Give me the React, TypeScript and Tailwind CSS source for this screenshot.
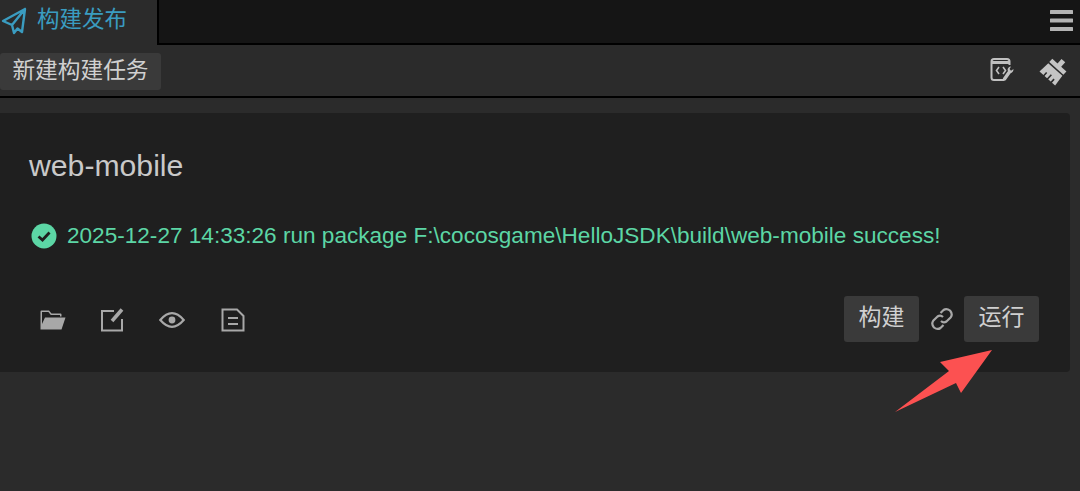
import React from "react";

const sans = "font-['Liberation_Sans','Noto_Sans_CJK_SC',sans-serif]";

function Send() {
  return (
    <svg width="26" height="28" viewBox="0 0 26 28" fill="none" stroke="#3a9cc0" strokeWidth="2.4" strokeLinejoin="round" strokeLinecap="round">
      <path d="M24 2 L2 14 L11 18 L13 26 L16.5 21.5 L21 25 Z M24 2 L11 18" />
    </svg>
  );
}

function Lines() {
  return (
    <svg width="24" height="22" viewBox="0 0 24 22" fill="#b3b3b3">
      <rect x="0" y="0" width="23" height="4" rx="0.5" />
      <rect x="0" y="8.5" width="23" height="4" rx="0.5" />
      <rect x="0" y="17" width="23" height="4" rx="0.5" />
    </svg>
  );
}

function CodeWrench() {
  return (
    <svg width="24" height="24" viewBox="0 0 24 24" fill="none" stroke="#c0c0c0" strokeWidth="2">
      <path d="M14 22 H4 Q1.5 22 1.5 19.5 V3.5 Q1.5 1 4 1 H17 Q19.5 1 19.5 3.5 V7" />
      <path d="M2 4.5 H19" strokeWidth="3" />
      <path d="M9 9 L6.5 12.5 L9 16 M13 9 L15.5 12.5 L13 16" strokeWidth="1.6" />
      <path d="M14.5 21 L19 14.5" strokeWidth="3.4" strokeLinecap="round" />
      <path d="M17.5 12 Q18 8.5 21 8.5 L19.6 11 L21 12.7 L23.5 11 Q23.5 14.8 19.5 15.5 Z" fill="#c0c0c0" stroke="none" />
    </svg>
  );
}

function Broom() {
  return (
    <svg width="28" height="28" viewBox="0 0 28 28" className="overflow-visible">
      <g transform="rotate(42 14 14)">
        <rect x="11.5" y="0" width="5" height="7" fill="#c4c4c4" />
        <rect x="4.5" y="6" width="19" height="4.5" fill="#c4c4c4" />
        <path d="M4.5 12 H23.5 L24.5 24 H3.5 Z" fill="#c4c4c4" />
        <path d="M9.5 25 V20 M14.5 25 V18.5 M19.5 25 V20" stroke="#2b2b2b" strokeWidth="1.6" fill="none" />
      </g>
    </svg>
  );
}

function FolderOpen() {
  return (
    <svg width="26" height="20" viewBox="0 0 26 20" fill="#a8a8a8">
      <path d="M0.5 19.5 V1.5 Q0.5 0.5 1.5 0.5 H9 L11.5 3.5 H20.5 Q21.5 3.5 21.5 4.5 V6.5 H20 V5 H10.8 L8.4 2 H2 V14 L5 7.5 H25.5 L21.5 19.5 Z" />
    </svg>
  );
}

function EditBox() {
  return (
    <svg width="24" height="24" viewBox="0 0 24 24" fill="none" stroke="#a8a8a8" strokeWidth="2">
      <path d="M14 3 H2 V22.5 H22 V11" />
      <path d="M12 13 L22 1.5" strokeWidth="3.6" />
    </svg>
  );
}

function Eye() {
  return (
    <svg width="26" height="18" viewBox="0 0 26 18" fill="none" stroke="#a8a8a8" strokeWidth="2.2">
      <path d="M1.3 9 Q13 -4.6 24.7 9 Q13 22.6 1.3 9 Z" />
      <circle cx="13" cy="9" r="3.4" fill="#a8a8a8" stroke="none" />
    </svg>
  );
}

function Doc() {
  return (
    <svg width="24" height="24" viewBox="0 0 24 24" fill="none" stroke="#a8a8a8" strokeWidth="2">
      <path d="M1.5 1.5 H16 L22.5 8 V22.5 H1.5 Z" />
      <path d="M7 10 H17 M7 16 H17" />
    </svg>
  );
}

function LinkIcon() {
  return (
    <svg width="24" height="24" viewBox="0 0 24 24" fill="none" stroke="#a8a8a8" strokeWidth="2.2">
      <path d="M10.5 6 L13.5 3 Q16.5 0.8 20 3.5 Q23 7 20.8 10.2 L16.5 14.5 Q13.5 16.5 11 14" />
      <path d="M13.5 18 L10.5 21 Q7.5 23.2 4 20.5 Q1 17 3.2 13.8 L7.5 9.5 Q10.5 7.5 13 10" />
    </svg>
  );
}

function Check() {
  return (
    <svg width="26" height="26" viewBox="0 0 26 26">
      <circle cx="13" cy="13" r="12.5" fill="#5cd6a5" />
      <path d="M7.5 13.5 L11.5 17 L18.5 9.5" fill="none" stroke="#1f1f1f" strokeWidth="2.8" />
    </svg>
  );
}

function Arrow() {
  return (
    <svg className="absolute left-[890px] top-[345px]" width="106" height="72" viewBox="0 0 106 72" fill="#fc5151">
      <path d="M5 67 L59 26 L50 17 L102 5 L71 48 L66 38 Z" />
    </svg>
  );
}

export default function App() {
  return (
    <div className={`relative w-[1080px] h-[491px] overflow-hidden bg-[#2b2b2b] ${sans}`}>
      <div className="flex h-[45px] bg-[#151515]">
        <div className="flex items-center w-[157px] h-[45px] bg-[#2b2b2b] pl-[1px] pb-[4px] gap-[10px]">
          <Send />
          <span className="text-[22.5px] text-[#3a9cc0] leading-none">构建发布</span>
        </div>
        <div className="flex-1 border-l-[2px] border-b-[2px] border-black flex justify-end items-center pr-[6px] pb-[2px]">
          <Lines />
        </div>
      </div>
      <div className="flex items-start justify-between h-[53px] border-b-[2px] border-black">
        <div className="mt-[8px] h-[37px] w-[161px] bg-[#3a3a3a] rounded-[3px] flex items-center justify-center pb-[3px] text-[22.7px] text-[#d0d0d0] leading-none">
          新建构建任务
        </div>
        <div className="flex items-start gap-[26px] pr-[12px] mt-[13px]">
          <CodeWrench />
          <div className="-mt-[1px]">
            <Broom />
          </div>
        </div>
      </div>
      <div className="mt-[15px] w-[1070px] h-[259px] bg-[#1f1f1f] rounded-r-[4px] pl-[29px] pr-[30px] flex flex-col">
        <div className="mt-[37px] h-[32px] text-[30.2px] leading-[32px] text-[#c9c9c9]">web-mobile</div>
        <div className="mt-[41px] ml-[2px] flex items-center gap-[10px] text-[22.58px] text-[#5cd6a5] leading-[26px] whitespace-nowrap">
          <Check />
          <span>2025-12-27 14:33:26 run package F:\cocosgame\HelloJSDK\build\web-mobile success!</span>
        </div>
        <div className="mt-[47px] flex items-center justify-between">
          <div className="flex items-center ml-[11px] pt-[2px]">
            <FolderOpen />
            <div className="ml-[34px]"><EditBox /></div>
            <div className="ml-[35px]"><Eye /></div>
            <div className="ml-[36px]"><Doc /></div>
          </div>
          <div className="flex items-center mr-[1px]">
            <div className="w-[75px] h-[46px] bg-[#3a3a3a] rounded-[3px] flex items-center justify-center pb-[4px] text-[23px] text-[#d0d0d0]">构建</div>
            <div className="ml-[11px] mr-[10px]"><LinkIcon /></div>
            <div className="w-[75px] h-[46px] bg-[#3a3a3a] rounded-[3px] flex items-center justify-center pb-[4px] text-[23px] text-[#d0d0d0]">运行</div>
          </div>
        </div>
      </div>
      <Arrow />
    </div>
  );
}
